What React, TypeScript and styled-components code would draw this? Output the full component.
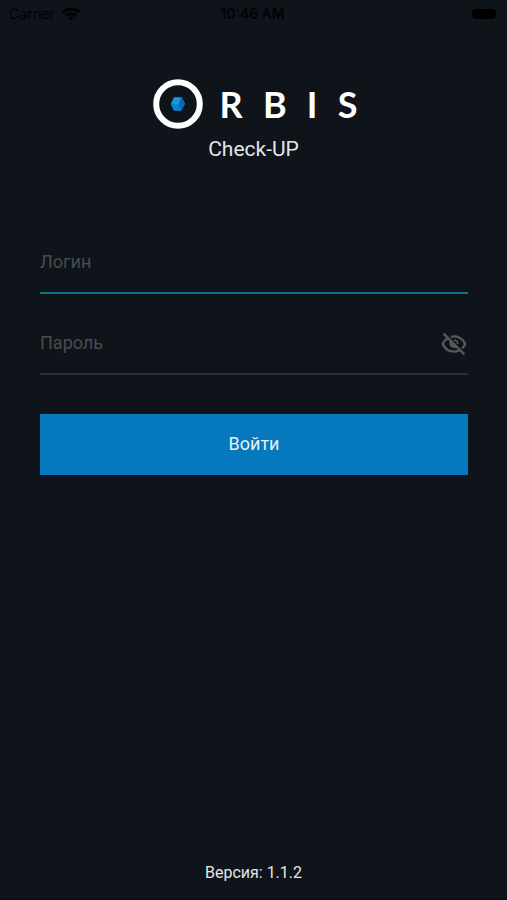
import React, { useState } from "react";
import styled, { createGlobalStyle } from "styled-components";

const GlobalStyle = createGlobalStyle`
  * { box-sizing: border-box; }
  body { margin: 0; background: #0f141a; }
`;

const Screen = styled.div`
  min-height: 100vh;
  display: flex;
  flex-direction: column;
  background: #0f141a;
  border-bottom: 1px solid #090d11;
  color: #e4e5e7;
  font-family: Roboto, sans-serif;
`;

const StatusBar = styled.header`
  display: grid;
  grid-template-columns: 1fr auto 1fr;
  align-items: center;
  height: 28px;
  padding: 0 11px 0 9px;
  color: #010204;
  font: 400 14px/20px Inter, sans-serif;
`;

const Carrier = styled.div`
  display: flex;
  align-items: center;
  gap: 7px;
`;

const Clock = styled.time`
  font-weight: 600;
`;

const Battery = styled.span`
  justify-self: end;
  width: 24px;
  height: 10px;
  border-radius: 4px;
  background: #000;
`;

const Brand = styled.div`
  display: flex;
  flex-direction: column;
  align-items: center;
  padding-top: 51px;
`;

const Logo = styled.div`
  display: flex;
  align-items: center;
  gap: 17px;
  padding-left: 3px;
`;

const Wordmark = styled.div`
  display: flex;
  justify-content: space-between;
  width: 138px;
  color: #fff;
  font: 700 36px/48px Lato, sans-serif;
`;

const Product = styled.h1`
  margin: 8px 0 0;
  font-size: 21px;
  line-height: 24px;
  font-weight: 400;
`;

const Form = styled.form`
  display: flex;
  flex-direction: column;
  padding: 80px 39px 0 40px;
`;

const Field = styled.div<{ $active?: boolean }>`
  display: flex;
  align-items: center;
  height: 53px;
  margin-bottom: 28px;
  padding-bottom: 10px;
  border-bottom: 2px solid ${(p) => (p.$active ? "#0f7584" : "#2a2d30")};
`;

const Input = styled.input`
  flex: 1;
  min-width: 0;
  height: 40px;
  padding: 0;
  border: 0;
  outline: 0;
  background: transparent;
  color: #e4e5e7;
  font: 400 18px/24px Roboto, sans-serif;
  &::placeholder { color: #484c4f; opacity: 1; }
`;

const IconButton = styled.button`
  display: flex;
  padding: 2px 0 0;
  border: 0;
  background: none;
  color: #54585b;
  cursor: pointer;
`;

const Submit = styled.button`
  height: 61px;
  margin-top: 11px;
  padding-bottom: 2px;
  border: 0;
  background: #0678bd;
  color: #e8f1f8;
  font: 400 18px/24px Roboto, sans-serif;
  cursor: pointer;
`;

const Version = styled.footer`
  margin-top: auto;
  padding-bottom: 14px;
  text-align: center;
  font-size: 16px;
  line-height: 24px;
`;

function WifiIcon() {
  return (
    <svg width="18" height="14" viewBox="0 0 18 14" fill="none" stroke="currentColor" strokeWidth="3" aria-hidden="true">
      <path d="M1 5.2C5.5 1 12.5 1 17 5.2" />
      <path d="M4 8.6C6.8 6 11.2 6 14 8.6" />
      <path d="M6.4 10.8C8 9.5 10 9.5 11.6 10.8L9 13.6Z" fill="currentColor" stroke="none" />
    </svg>
  );
}

function EyeIcon({ crossed }: { crossed: boolean }) {
  return (
    <svg width="28" height="28" viewBox="0 0 28 28" fill="none" stroke="currentColor" strokeWidth="2.4" aria-hidden="true">
      {crossed ? (
        <>
          <path d="M3.6 3.6L24.4 24.4" />
          <path d="M7.6 8.2C5.2 9.7 3.6 11.6 2.8 14C4.8 18.9 9 21.6 14 21.6C15.9 21.6 17.7 21.2 19.3 20.4" />
          <path d="M10.8 6.8C17.2 5.2 23 8.4 25.2 14C24.6 15.7 23.5 17.1 22.2 18.3" />
          <path d="M10.2 10.6C7.8 14 10.4 19.4 16.6 17.6Z" fill="currentColor" stroke="none" />
          <path d="M14 10.2C16.4 10.2 17.8 11.8 17.8 14" strokeWidth="1.6" />
        </>
      ) : (
        <>
          <path d="M2.8 14C7 4 21 4 25.2 14C21 24 7 24 2.8 14Z" />
          <circle cx="14" cy="14" r="4" />
        </>
      )}
    </svg>
  );
}

function OrbisMark() {
  return (
    <svg width="50" height="50" viewBox="0 0 50 50" aria-hidden="true">
      <circle cx="25" cy="25" r="21.8" fill="none" stroke="#fff" strokeWidth="6" />
      <path d="M21 18.2H28.5L32 24.7L28.2 31.5H21L17.8 25Z" fill="#1498e2" />
      <path d="M28.5 18.2L32 24.7L28.2 31.5L25.3 25.5Z" fill="#0868ae" />
      <path d="M17.8 25L25.3 25.5L28.2 31.5H21Z" fill="#0b83cc" />
    </svg>
  );
}

export default function App() {
  const [shown, setShown] = useState(false);
  return (
    <>
      <GlobalStyle />
      <Screen>
        <StatusBar>
          <Carrier>Carrier <WifiIcon /></Carrier>
          <Clock>10:46 AM</Clock>
          <Battery />
        </StatusBar>
        <Brand>
          <Logo>
            <OrbisMark />
            <Wordmark>
              <span>R</span><span>B</span><span>I</span><span>S</span>
            </Wordmark>
          </Logo>
          <Product>Check-UP</Product>
        </Brand>
        <Form onSubmit={(e) => e.preventDefault()}>
          <Field $active>
            <Input aria-label="Логин" placeholder="Логин" autoComplete="username" />
          </Field>
          <Field>
            <Input
              aria-label="Пароль"
              placeholder="Пароль"
              type={shown ? "text" : "password"}
              autoComplete="current-password"
            />
            <IconButton type="button" aria-label="Показать пароль" onClick={() => setShown(!shown)}>
              <EyeIcon crossed={!shown} />
            </IconButton>
          </Field>
          <Submit type="submit">Войти</Submit>
        </Form>
        <Version>Версия: 1.1.2</Version>
      </Screen>
    </>
  );
}
